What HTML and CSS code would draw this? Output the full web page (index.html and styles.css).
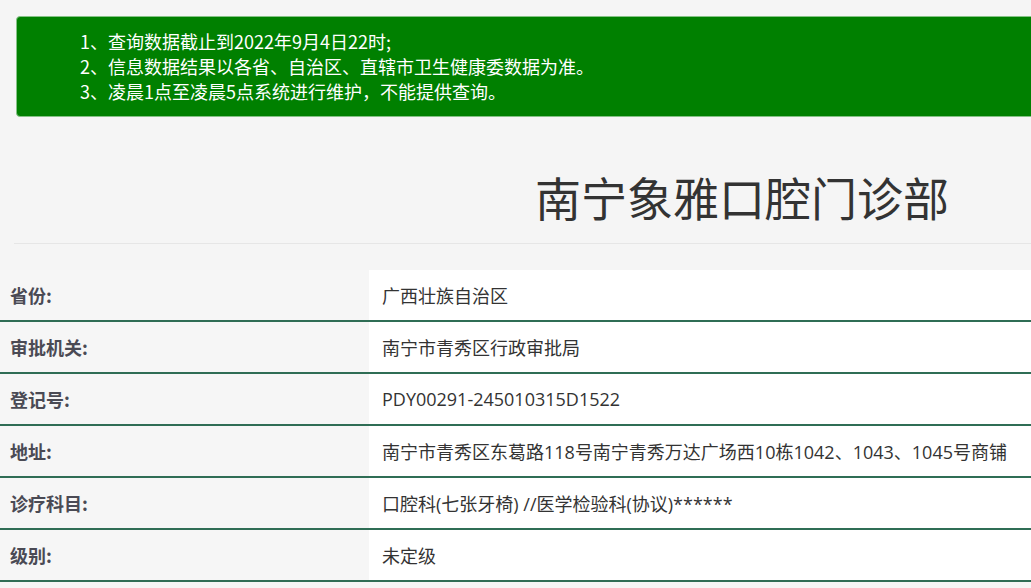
FILE: index.html
```html
<!DOCTYPE html>
<html lang="zh-CN">
<head>
<meta charset="utf-8">
<title>南宁象雅口腔门诊部</title>
<link rel="stylesheet" href="styles.css">
</head>
<body>
<div class="page">
  <div class="notice">
    <p>1、查询数据截止到2022年9月4日22时;</p>
    <p>2、信息数据结果以各省、自治区、直辖市卫生健康委数据为准。</p>
    <p>3、凌晨1点至凌晨5点系统进行维护，不能提供查询。</p>
  </div>
  <div class="title-wrap">
    <h1 class="title">南宁象雅口腔门诊部</h1>
  </div>
  <table class="info">
    <tr><th>省份:</th><td>广西壮族自治区</td></tr>
    <tr><th>审批机关:</th><td>南宁市青秀区行政审批局</td></tr>
    <tr><th>登记号:</th><td>PDY00291-245010315D1522</td></tr>
    <tr><th>地址:</th><td>南宁市青秀区东葛路118号南宁青秀万达广场西10栋1042、1043、1045号商铺</td></tr>
    <tr><th>诊疗科目:</th><td>口腔科(七张牙椅) //医学检验科(协议)******</td></tr>
    <tr><th>级别:</th><td>未定级</td></tr>
  </table>
</div>
</body>
</html>
```
FILE: styles.css
```css
html, body {
  margin: 0;
  padding: 0;
  overflow: hidden;
  background: #f5f5f5;
}
body {
  font-family: "Noto Sans CJK SC", "Noto Sans", sans-serif;
  color: #333;
}
.page {
  width: 1484px;
}
.notice {
  margin: 16px 16px 0 16px;
  background: #008000;
  border: 1px solid #86c286;
  border-radius: 4px;
  padding: 12px 0 12px 63px;
  color: #fff;
  font-size: 18px;
  line-height: 25px;
}
.notice p {
  margin: 0;
}
.title-wrap {
  margin: 0 14px;
  padding: 48px 0 16px;
  border-bottom: 1px solid #e6e6e6;
}
.title {
  margin: 0;
  text-align: center;
  font-size: 46px;
  line-height: 62px;
  font-weight: normal;
  color: #333;
}
.info {
  margin-top: 26px;
  width: 100%;
  border-collapse: collapse;
}
.info tr {
  border-bottom: 2px solid #2f6d55;
}
.info th, .info td {
  height: 50px;
  padding: 0;
  vertical-align: middle;
  text-align: left;
}
.info th {
  width: 369px;
  padding-left: 10px;
  box-sizing: border-box;
  background: #f6f6f6;
  font-size: 18px;
  font-weight: bold;
  color: #4a4a54;
}
.info td {
  background: #fff;
  padding-left: 13px;
  font-family: "Open Sans", "Noto Sans CJK SC", sans-serif;
  font-size: 18px;
  color: #333;
}
```
